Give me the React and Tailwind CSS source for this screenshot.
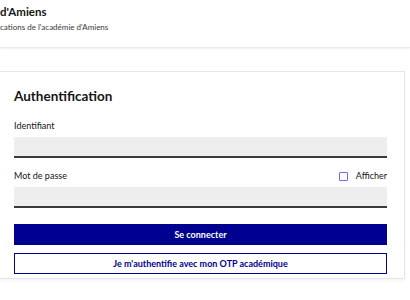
export default function App() {
  return (
    <div className="w-[410px] h-[300px] bg-white overflow-hidden font-['Lato','Noto_Sans',sans-serif] text-[#161616]">
      {/* Header */}
      <header className="h-[48px] border-b border-[#eaeaea] shadow-[0_1px_2px_rgba(0,0,0,0.06)] pt-[5px]">
        <div className="text-[11.5px] font-bold leading-[14px]">d'Amiens</div>
        <div className="text-[8px] leading-[10px] mt-[3px] text-[#3a3a3a]">
          cations de l'académie d'Amiens
        </div>
      </header>

      {/* Card */}
      <div className="mt-[23px] w-[405px] h-[208px] border-t border-r border-b border-[#e5e5e5] shadow-[0_2px_3px_rgba(0,0,0,0.04)] pl-[14px] pr-[17px] pt-[15px]">
        <h1 className="text-[13.5px] font-bold leading-[18px]">Authentification</h1>

        <label className="block mt-[15px] text-[9px] leading-[12px]">Identifiant</label>
        <div className="mt-[5px] h-[21px] bg-[#eeeeee] border-b-2 border-[#3a3a3a]"></div>

        <div className="mt-[12px] flex items-center justify-between text-[9px] leading-[12px]">
          <span>Mot de passe</span>
          <span className="flex items-center gap-[8px]">
            <span className="w-[9px] h-[9px] border border-[#6a6af4] rounded-[1px]"></span>
            <span>Afficher</span>
          </span>
        </div>
        <div className="mt-[5px] h-[21px] bg-[#eeeeee] border-b-2 border-[#3a3a3a]"></div>

        <button className="mt-[16px] w-full h-[21px] bg-[#000091] text-white text-[9px] font-bold flex items-center justify-center">
          Se connecter
        </button>
        <button className="mt-[8px] w-full h-[21px] bg-white border border-[#000091] text-[#000091] text-[9px] font-bold flex items-center justify-center">
          Je m'authentifie avec mon OTP académique
        </button>
      </div>
    </div>
  );
}
